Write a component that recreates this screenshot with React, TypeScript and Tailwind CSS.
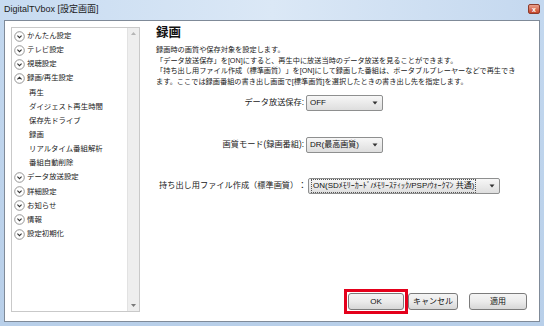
import React from 'react';

const jp = "font-['Liberation_Sans','Noto_Sans_CJK_JP',sans-serif] [text-spacing-trim:space-all]";

type NavItem = { label: string; kind: 'closed' | 'open' | 'sub' };

const navItems: NavItem[] = [
  { label: 'かんたん設定', kind: 'closed' },
  { label: 'テレビ設定', kind: 'closed' },
  { label: '視聴設定', kind: 'closed' },
  { label: '録画/再生設定', kind: 'open' },
  { label: '再生', kind: 'sub' },
  { label: 'ダイジェスト再生時間', kind: 'sub' },
  { label: '保存先ドライブ', kind: 'sub' },
  { label: '録画', kind: 'sub' },
  { label: 'リアルタイム番組解析', kind: 'sub' },
  { label: '番組自動削除', kind: 'sub' },
  { label: 'データ放送設定', kind: 'closed' },
  { label: '詳細設定', kind: 'closed' },
  { label: 'お知らせ', kind: 'closed' },
  { label: '情報', kind: 'closed' },
  { label: '設定初期化', kind: 'closed' },
];

const CircleChevron = ({ up }: { up?: boolean }) => (
  <svg width="11" height="11" viewBox="0 0 11 11" className="shrink-0">
    <circle cx="5.5" cy="5.5" r="4.8" fill="#fff" stroke="#8a8a8a" strokeWidth="0.9" />
    <path
      d={up ? 'M3.4 6.4 L5.5 4.3 L7.6 6.4' : 'M3.4 4.6 L5.5 6.7 L7.6 4.6'}
      fill="none"
      stroke="#333"
      strokeWidth="1.1"
    />
  </svg>
);

const Combo = ({ value, className, focus }: { value: string; className: string; focus?: boolean }) => (
  <div
    className={`h-[16px] flex items-center justify-between border border-[#8e8f8f] rounded-[2px] bg-gradient-to-b from-[#f7f7f7] to-[#dedede] pl-[2px] pr-[4px] ${className}`}
  >
    <span
      className={`text-[8px] leading-[12px] text-[#111] whitespace-nowrap px-px ${focus ? 'border border-dotted border-[#555]' : ''}`}
    >
      {value}
    </span>
    <svg width="6" height="4" viewBox="0 0 6 4">
      <path d="M0.5 0.5 L5.5 0.5 L3 3.5 Z" fill="#333" />
    </svg>
  </div>
);

const Btn = ({ label, w }: { label: string; w: string }) => (
  <div
    className={`h-[17px] ${w} flex items-center justify-center border border-[#7b7b7b] rounded-[3px] bg-gradient-to-b from-[#f4f4f4] via-[#ebebeb] to-[#d7d7d7] text-[8px] text-[#111]`}
  >
    {label}
  </div>
);

export default function App() {
  return (
    <div className={`w-[544px] h-[326px] flex flex-col bg-gradient-to-b from-[#c3d8ef] to-[#b8cfe9] ${jp}`}>
      {/* Title bar */}
      <div className="h-[20px] flex items-start justify-between pl-[4px] pr-[4px] pt-[3px] bg-gradient-to-r from-[#c7dbf1] via-[#dbe8f6] to-[#c4d8ef]">
        <span className="text-[9px] leading-[12px] text-[#1a1a1a]">DigitalTVbox [設定画面]</span>
        <div className="w-[12px] h-[10px] mt-px flex items-center justify-center rounded-[2px] border border-[#8d3b2b] bg-gradient-to-b from-[#e9a08c] to-[#c6442a]">
          <span className="text-[7px] leading-none font-bold text-white">x</span>
        </div>
      </div>

      {/* Window body */}
      <div className="flex-1 mx-[4px] mb-[4px] bg-white border border-[#7f8a98] flex">
        {/* Left navigation */}
        <div className="ml-[6px] mt-[6px] w-[129px] h-[285px] border border-[#c9c9c9] flex">
          <div className="flex-1 flex flex-col pt-px">
            {navItems.map((it) => (
              <div key={it.label} className="h-[14.15px] flex items-center">
                {it.kind === 'sub' ? (
                  <span className="pl-[17px] text-[7.4px] leading-[10px] text-[#222] whitespace-nowrap">{it.label}</span>
                ) : (
                  <div className="flex items-center pl-[2px] gap-[2px]">
                    <CircleChevron up={it.kind === 'open'} />
                    <span className="text-[7.4px] leading-[10px] text-[#222] whitespace-nowrap">{it.label}</span>
                  </div>
                )}
              </div>
            ))}
          </div>
          <div className="w-[12px] bg-[#eeeeee] border-l border-[#e2e2e2] flex flex-col items-center justify-between py-[4px]">
            <svg width="5" height="3" viewBox="0 0 5 3">
              <path d="M0 3 L5 3 L2.5 0 Z" fill="#b5b5b5" />
            </svg>
            <svg width="5" height="3" viewBox="0 0 5 3">
              <path d="M0 0 L5 0 L2.5 3 Z" fill="#7a7a7a" />
            </svg>
          </div>
        </div>

        {/* Right content */}
        <div className="flex-1 ml-[16px] pr-[12px] pb-[7px] flex flex-col">
          <h1 className="mt-[5px] text-[12.5px] leading-[15px] font-bold text-[#111]">録画</h1>
          <div className="mt-[4px] text-[7.2px] leading-[10.6px] text-[#222] whitespace-nowrap">
            <p>録画時の画質や保存対象を設定します。</p>
            <p>「データ放送保存」を[ON]にすると、再生中に放送当時のデータ放送を見ることができます。</p>
            <p>「持ち出し用ファイル作成（標準画質）」を[ON]にして録画した番組は、ポータブルプレーヤーなどで再生でき</p>
            <p>ます。ここでは録画番組の書き出し画面で[標準画質]を選択したときの書き出し先を指定します。</p>
          </div>

          <div className="mt-[8px] flex items-center">
            <span className="w-[150px] pr-[2px] text-right text-[8.2px] text-[#222] whitespace-nowrap">データ放送保存:</span>
            <Combo value="OFF" className="w-[77px]" />
          </div>
          <div className="mt-[26px] flex items-center">
            <span className="w-[150px] pr-[2px] text-right text-[8.2px] text-[#222] whitespace-nowrap">画質モード(録画番組):</span>
            <Combo value="DR(最高画質)" className="w-[77px]" />
          </div>
          <div className="mt-[25px] flex items-center">
            <span className="w-[152px] pl-[3px] text-left text-[8.2px] text-[#222] whitespace-nowrap">持ち出し用ファイル作成（標準画質）：</span>
            <Combo value="ON(SDﾒﾓﾘｰｶｰﾄﾞ/ﾒﾓﾘｰｽﾃｨｯｸ/PSP/ｳｫｰｸﾏﾝ 共通)" className="w-[192px]" focus />
          </div>

          <div className="mt-auto flex items-center justify-end">
            <div className="border-[3px] border-[#e4001b] p-px">
              <Btn label="OK" w="w-[56px]" />
            </div>
            <Btn label="キャンセル" w="w-[50px]" />
            <div className="ml-[11px]">
              <Btn label="適用" w="w-[58px]" />
            </div>
          </div>
        </div>
      </div>
    </div>
  );
}
